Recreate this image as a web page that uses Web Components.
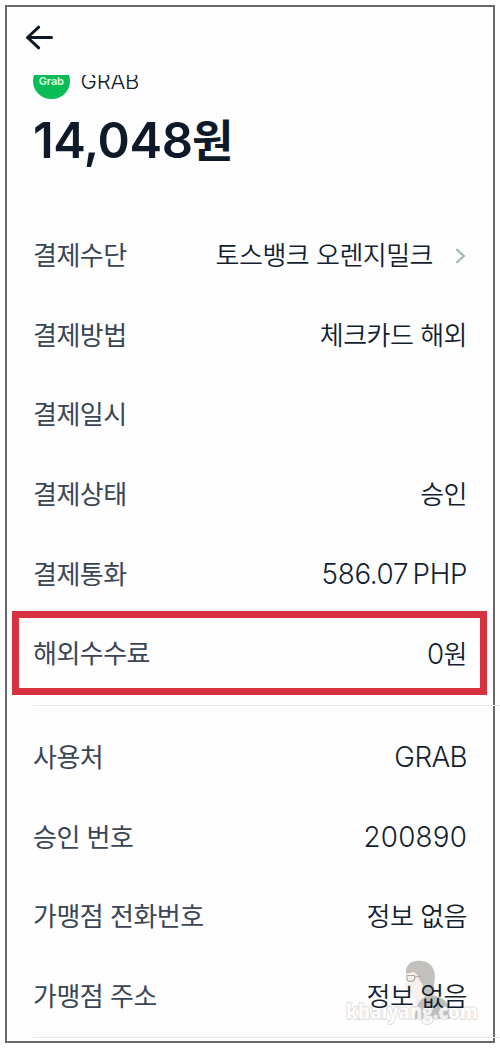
<!DOCTYPE html>
<html lang="ko">
<head>
<meta charset="utf-8">
<title>결제 상세</title>
<style>
html,body{margin:0;background:#fff;height:100%;overflow:hidden}
body{font-family:Inter,"Noto Sans CJK KR",sans-serif}
</style>
</head>
<body>
<payment-screen>
  <merchant-head slot="head" name="GRAB" amount="14,048" unit="원"></merchant-head>
  <detail-row label="결제수단" value="토스뱅크 오렌지밀크" link></detail-row>
  <detail-row label="결제방법" value="체크카드 해외"></detail-row>
  <detail-row label="결제일시" value=""></detail-row>
  <detail-row label="결제상태" value="승인"></detail-row>
  <detail-row label="결제통화" value="586.07 PHP" style="--ls:-.35px"></detail-row>
  <detail-row label="해외수수료" value="0원" marked></detail-row>
  <section-line></section-line>
  <detail-row label="사용처" value="GRAB" style="--ls:-.6px"></detail-row>
  <detail-row label="승인 번호" value="200890" style="--ls:.2px"></detail-row>
  <detail-row label="가맹점 전화번호" value="정보 없음"></detail-row>
  <detail-row label="가맹점 주소" value="정보 없음"></detail-row>
  <section-line end></section-line>
  <blog-mark slot="mark"></blog-mark>
</payment-screen>
<script>
const define = (name, render) => customElements.define(name, class extends HTMLElement {
  connectedCallback() {
    if (this.shadowRoot) return;
    this.attachShadow({mode: 'open'}).innerHTML = render(this);
  }
});

define('payment-screen', () => `
<style>
:host{display:block;position:relative;box-sizing:border-box;width:500px;height:1048px;padding:5px 5px 4px;background:#fff}
main{box-sizing:border-box;height:1038px;width:490px;border:2px solid #68696b;padding:0 26px 0 26px;background:#fefefe}
nav{height:68px;display:flex;align-items:flex-start}
nav svg{margin:17px 0 0 -9px}
.rows{padding-top:37px}
</style>
<main>
<nav><svg width="30" height="28" viewBox="0 0 30 28" fill="none" stroke="#0b1627" stroke-width="3" stroke-linecap="round" stroke-linejoin="round"><path d="M14.7 3.2 3.5 13.5 14.7 23.8M3.5 13.5H27.5"/></svg></nav>
<slot name="head"></slot>
<div class="rows"><slot></slot></div>
</main>
<slot name="mark"></slot>`);

define('merchant-head', el => `
<style>
:host{display:block;height:103px;color:#0e1a2a}
.top{height:25px;overflow:hidden}
.brand{display:flex;align-items:center;height:37px;margin-top:-12.5px;gap:11px;font-size:22px;font-weight:350;letter-spacing:-.2px}
.logo{flex:none;width:36.5px;height:36.5px;border-radius:50%;background:#08bd58;color:#d9ffe6;display:grid;place-items:center;font:600 11px/1 Inter,sans-serif;letter-spacing:-.2px}
.amount{display:flex;align-items:baseline;height:78px;line-height:78px;font-weight:600;font-size:49px;letter-spacing:-.45px}
.unit{font:700 45px/78px "Noto Sans CJK KR",sans-serif;letter-spacing:0;margin-left:-.5px}
</style>
<div class="top"><div class="brand"><span class="logo">Grab</span><span>${el.getAttribute('name')}</span></div></div>
<div class="amount"><span>${el.getAttribute('amount')}</span><span class="unit">${el.getAttribute('unit')}</span></div>`);

define('detail-row', el => `
<style>
:host{display:flex;align-items:center;justify-content:space-between;position:relative;z-index:1;height:79.7px;font-size:26px;line-height:40px;white-space:nowrap}
.label,.value{padding-top:2px}
.label{color:#3a4656;letter-spacing:-.52px}
.value{display:flex;align-items:center;color:#131f30;font-weight:350;letter-spacing:var(--ls,-.52px)}
.latin{font-size:27.8px;white-space:pre;word-spacing:-3px}
svg{margin:0 0 0 20px}
.mark{position:absolute;left:-21px;right:-20px;top:-2px;height:70px;border:7px solid #d7323f}
</style>
${el.hasAttribute('marked') ? '<div class="mark"></div>' : ''}
<span class="label">${el.getAttribute('label')}</span>
<span class="value"><span>${el.getAttribute('value').replace(/[A-Z0-9.][A-Z0-9. ]*/g, '<span class="latin">$&</span>')}</span>${el.hasAttribute('link') ? '<svg width="14" height="20" viewBox="0 0 14 20" fill="none" stroke="#a3b9b3" stroke-width="2.3"><path d="m3.3 3 7.5 7-7.5 7"/></svg>' : ''}</span>`);

define('section-line', el => `
<style>
:host{display:block;width:467px;height:1px;background:#e6e7e9;position:relative;margin:${el.hasAttribute('end') ? '1px 0 0' : '12px 0 11px'}}
</style>`);

define('blog-mark', () => `
<style>
:host{position:absolute;z-index:0;left:345px;top:956px;width:140px;height:70px}
svg{display:block;overflow:visible}
text{font:800 21px/1 "Open Sans","Noto Sans",sans-serif;paint-order:stroke}
</style>
<svg width="140" height="70" viewBox="0 0 140 70">
<g opacity=".7">
<path fill="#f7eae3" d="M64 12 62 24 60 30 64 36 70 42 72 52 84 50 88 40 86 18Z"/>
<path fill="#a9a8a3" d="M61 14C62 7 69 4 76 5c9 0 14 7 14 16-1 7-1 14-4 19l-5 2-2-8c0-6-5-9-6-14l-4-4-8 2Z"/>
<path fill="#a3a3a1" d="M70 63c0-8 2-15 6-19l8-7c6 4 12 3 16 8 4 4 4 12 5 18Z"/>
<path fill="none" stroke="#8d8381" stroke-width="1.2" d="M62 19.5h7.5c1 3-.5 6-3.5 6s-5-1-4-6ZM70 21l7-1"/>
</g>
<text x="1" y="63" textLength="132" lengthAdjust="spacingAndGlyphs" fill="#fff" fill-opacity=".8" stroke="#ccc" stroke-opacity=".75" stroke-width="1.6">khaiyang.com</text>
</svg>`);
</script>
</body>
</html>
